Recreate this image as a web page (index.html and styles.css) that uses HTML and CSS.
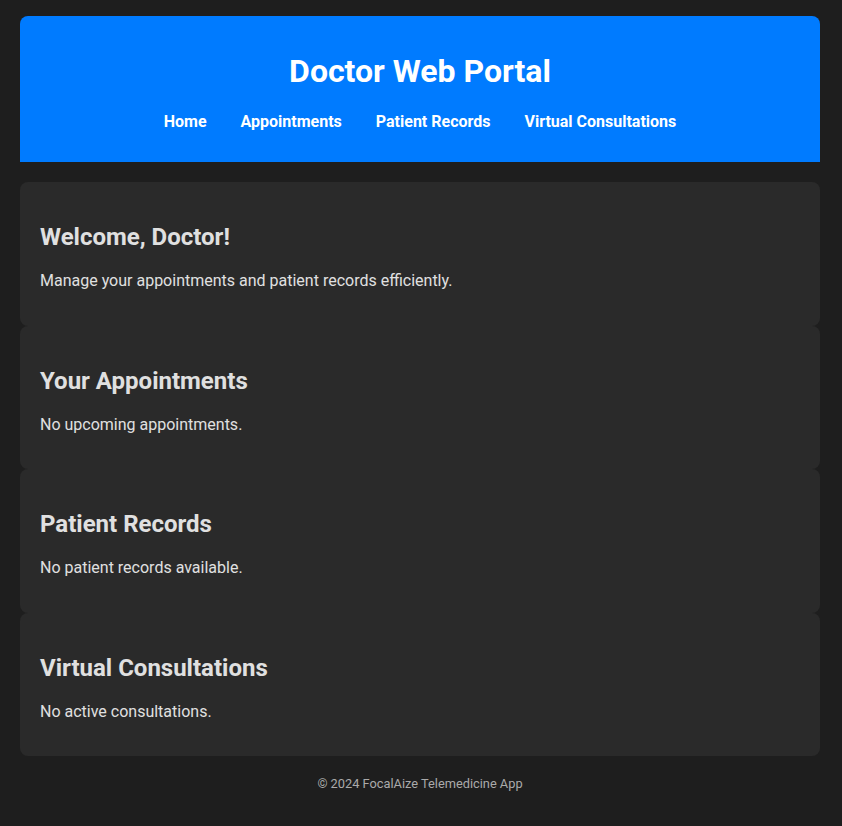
FILE: index.html
```html
<!DOCTYPE html>
<html lang="en">
<head>
<meta charset="utf-8">
<title>Doctor Web Portal</title>
<link rel="stylesheet" href="styles.css">
</head>
<body>
<header class="site-header">
  <h1 class="site-title">Doctor Web Portal</h1>
  <nav class="site-nav">
    <a href="#">Home</a>
    <a href="#">Appointments</a>
    <a href="#">Patient Records</a>
    <a href="#">Virtual Consultations</a>
  </nav>
</header>
<main class="content">
  <section class="card">
    <h2>Welcome, Doctor!</h2>
    <p>Manage your appointments and patient records efficiently.</p>
  </section>
  <section class="card">
    <h2>Your Appointments</h2>
    <p>No upcoming appointments.</p>
  </section>
  <section class="card">
    <h2>Patient Records</h2>
    <p>No patient records available.</p>
  </section>
  <section class="card">
    <h2>Virtual Consultations</h2>
    <p>No active consultations.</p>
  </section>
</main>
<footer class="site-footer">© 2024 FocalAize Telemedicine App</footer>
</body>
</html>
```

FILE: styles.css
```css
html, body {
  margin: 0;
  background: #1e1e1e;
}
body {
  padding: 16px 22px 16px 20px;
  font-family: Roboto, "Liberation Sans", sans-serif;
  color: #e0e0e0;
}
.site-header {
  background: #007bff;
  color: #ffffff;
  border-radius: 8px 8px 0 0;
  padding: 20px;
  text-align: center;
  margin-bottom: 20px;
  height: 146px;
  box-sizing: border-box;
}
.site-title {
  margin: 17px 0 21px;
  font-size: 32px;
  font-weight: 700;
  line-height: 37.5px;
}
.site-nav {
  display: flex;
  justify-content: center;
  gap: 34px;
  line-height: 19px;
}
.site-nav a {
  color: #ffffff;
  text-decoration: none;
  font-weight: 700;
  font-size: 16px;
}
.card {
  background: #2a2a2a;
  border-radius: 8px;
  padding: 20px;
}
.card h2 {
  font-size: 24px;
  font-weight: 700;
  margin: 21px 0 20px;
  line-height: 28px;
}
.card p {
  margin: 16px 0 15.5px;
  font-size: 16px;
  line-height: 19px;
}
.site-footer {
  text-align: center;
  font-size: 12.8px;
  color: #aaaaaa;
  padding: 20px 0 0;
  line-height: 15px;
}
```
